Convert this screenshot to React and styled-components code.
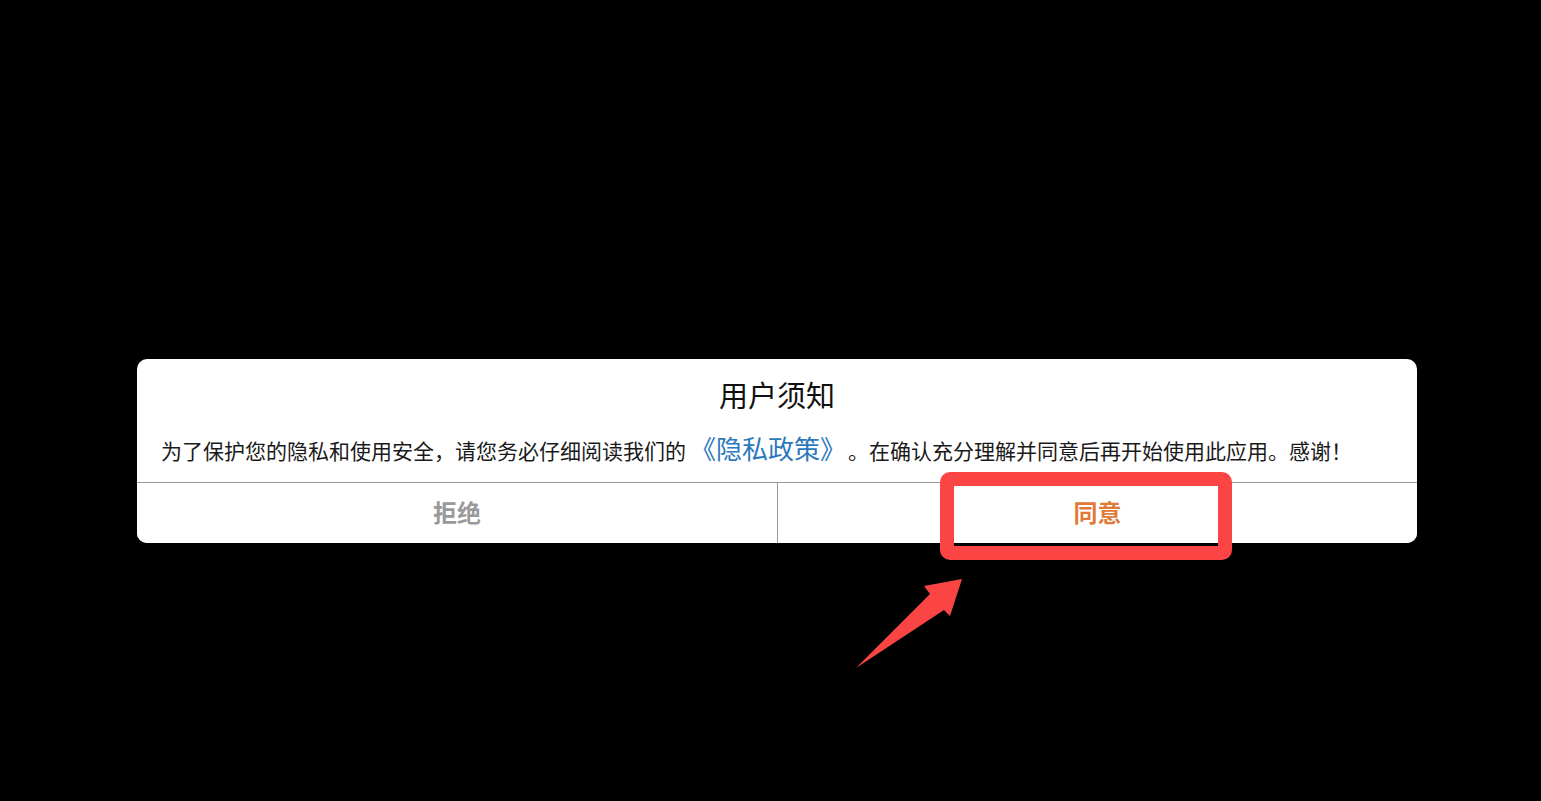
import React from "react";
import styled, { createGlobalStyle } from "styled-components";

const GlobalStyle = createGlobalStyle`
  html, body {
    margin: 0;
    background: #000;
  }
  body {
    font-family: "Noto Sans CJK SC", "Noto Sans", sans-serif;
  }
`;

const Page = styled.div`
  position: relative;
  width: 1541px;
  height: 801px;
  box-sizing: border-box;
  padding: 359px 0 0 137px;
  background: #000;
  overflow: hidden;
`;

const Dialog = styled.div`
  width: 1280px;
  background: #fff;
  border-radius: 10px;
  overflow: hidden;
`;

const Title = styled.h2`
  margin: 0;
  padding-top: 15px;
  font-size: 29px;
  font-weight: 400;
  line-height: 40px;
  text-align: center;
  color: #111;
`;

const Message = styled.p`
  margin: 0;
  padding: 17px 24px 18px;
  font-size: 21px;
  line-height: 33px;
  height: 33px;
  color: #1a1a1a;
  white-space: nowrap;
`;

const Link = styled.a`
  color: #2b79bd;
  font-size: 26px;
  text-decoration: none;
  margin: 0 15px 0 4px;
`;

const Footer = styled.div`
  display: grid;
  grid-template-columns: 1fr 1fr;
  border-top: 1px solid #9a9a9a;
  height: 60px;
`;

const Action = styled.button`
  border: none;
  border-left: ${p => (p.$first ? "none" : "1px solid #9a9a9a")};
  background: #fff;
  padding: 0 0 4px;
  font-family: inherit;
  font-size: 24px;
  font-weight: 700;
  color: ${p => p.$color};
  cursor: pointer;
`;

const Highlight = styled.div`
  position: absolute;
  left: 940px;
  top: 472px;
  width: 292px;
  height: 88px;
  box-sizing: border-box;
  border: 14px solid #fb4545;
  border-radius: 10px;
  pointer-events: none;
`;

const Arrow = styled.svg`
  position: absolute;
  left: 840px;
  top: 570px;
  width: 130px;
  height: 105px;
  pointer-events: none;
`;

export default function App() {
  return (
    <>
      <GlobalStyle />
      <Page>
        <Dialog>
          <Title>用户须知</Title>
          <Message>
            为了保护您的隐私和使用安全，请您务必仔细阅读我们的
            <Link href="#">《隐私政策》</Link>
            。在确认充分理解并同意后再开始使用此应用。感谢！
          </Message>
          <Footer>
            <Action $first $color="#999">拒绝</Action>
            <Action $color="#e07a38">同意</Action>
          </Footer>
        </Dialog>
        <Highlight />
        <Arrow viewBox="0 0 130 105">
          <polygon
            points="122,9 84,16 90,24 16,98 104,40 110,46"
            fill="#fb4545"
          />
        </Arrow>
      </Page>
    </>
  );
}
